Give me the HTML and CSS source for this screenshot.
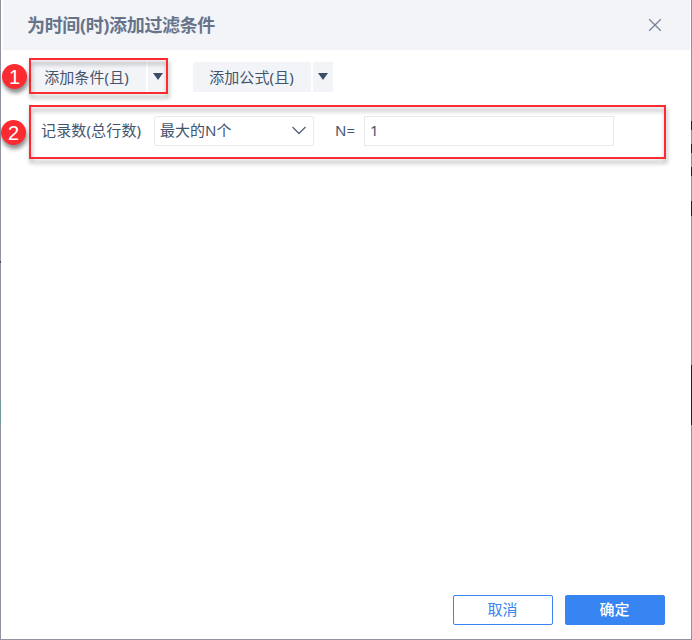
FILE: index.html
```
<!DOCTYPE html>
<html lang="zh-CN">
<head>
<meta charset="utf-8">
<title>为时间(时)添加过滤条件</title>
<link rel="stylesheet" href="styles.css">
</head>
<body>
<div class="dialog">
  <header class="header">
    <h1 class="title">为时间(时)添加过滤条件</h1>
    <svg class="close" viewBox="0 0 14 14"><path d="M1.2 1.2 12.8 12.8M12.8 1.2 1.2 12.8"/></svg>
  </header>
  <main class="content">
    <div class="toolbar">
      <div class="split">
        <button class="split-main">添加条件(且)</button>
        <button class="split-arrow"><svg viewBox="0 0 10 7"><path d="M0 0h10L5 7z"/></svg></button>
      </div>
      <div class="split">
        <button class="split-main">添加公式(且)</button>
        <button class="split-arrow"><svg viewBox="0 0 10 7"><path d="M0 0h10L5 7z"/></svg></button>
      </div>
    </div>
    <div class="filter">
      <span class="field-name">记录数(总行数)</span>
      <div class="select"><span>最大的N个</span><svg viewBox="0 0 14 9"><path d="M.5 1 7 7.5 13.5 1"/></svg></div>
      <span class="n-label">N=</span>
      <div class="input">1</div>
    </div>
  </main>
  <footer class="footer">
    <button class="btn">取消</button>
    <button class="btn primary">确定</button>
  </footer>
</div>
<div class="mark mark-one"></div>
<div class="mark mark-two"></div>
<div class="badge badge-one">1</div>
<div class="badge badge-two">2</div>
<i class="edge edge-a"></i><i class="edge edge-b"></i><i class="edge edge-c"></i><i class="edge edge-d"></i><i class="edge edge-e"></i>
<i class="edge edge-f"></i><i class="edge edge-g"></i>
</body>
</html>
```
FILE: styles.css
```
* { box-sizing: border-box; }
body {
  margin: 0;
  width: 692px;
  height: 640px;
  padding: 0 1px 1px;
  overflow: hidden;
  position: relative;
  background: #9193a0;
  color: #44546d;
  font: 15px/20px "Noto Sans", "Noto Sans CJK SC", sans-serif;
}
button { border: 0; padding: 0; margin: 0; font: inherit; color: inherit; white-space: nowrap; }
.dialog { height: 639px; display: flex; flex-direction: column; background: #fff; }
.header {
  height: 50px;
  margin: 0 1px 0 2px;
  padding: 0 28px 0 24px;
  display: flex;
  align-items: center;
  justify-content: space-between;
  background: #f2f4f8;
}
.title { margin: 0; font-size: 18px; line-height: 26px; font-weight: 700; letter-spacing: -.35px; color: #667389; }
.close { width: 14px; height: 14px; margin-bottom: 1px; fill: none; stroke: #77839b; stroke-width: 1.3; }
.content { flex: 1; padding: 12px 26px 0 29px; }
.toolbar { display: flex; gap: 25px; }
.split { display: flex; gap: 2px; }
.split-main { width: 118px; height: 30px; padding-right: 1px; letter-spacing: .1px; background: #f2f4f8; border-radius: 2px 0 0 2px; }
.split-arrow { width: 20px; height: 30px; display: flex; justify-content: center; padding: 11px 1px 0 0; background: #f2f4f8; }
.split-arrow svg { width: 10px; height: 7px; fill: #3d4d66; }
.split:first-child { width: 138px; }
.split:first-child .split-main { width: 116px; padding-right: 3px; }
.filter { display: flex; align-items: center; height: 30px; margin-top: 24px; padding-left: 11px; }
.field-name { width: 113px; padding-bottom: 2px; letter-spacing: .15px; white-space: nowrap; }
.select {
  width: 160px;
  height: 30px;
  padding: 0 7px 0 5px;
  display: flex;
  align-items: center;
  justify-content: space-between;
  border: 1px solid #e8eaed;
  border-radius: 2px;
}
.select span { padding-bottom: 2px; }
.select svg { width: 14px; height: 9px; margin-bottom: 1px; fill: none; stroke: #52617a; stroke-width: 1.3; }
.n-label { width: 29px; margin: 0 0 0 21px; padding-bottom: 2px; }
.input { width: 250px; height: 30px; padding: 3px 5px; border: 1px solid #e8eaed; }
.footer { display: flex; justify-content: flex-end; gap: 12px; padding: 0 26px 14px 0; }
.btn { width: 100px; height: 30px; padding: 0 1px 2px 0; border: 1px solid #3685f2; border-radius: 2px; background: #fff; color: #3685f2; }
.primary { background: #3685f2; color: #fff; font-weight: 500; }
.mark { position: absolute; border: 2px solid #fc2a31; filter: drop-shadow(1px 4px 2px rgba(0, 0, 0, .36)); }
.mark-one { left: 29px; top: 58px; width: 139px; height: 36px; }
.mark-two { left: 29px; top: 105px; width: 637px; height: 54px; }
.badge {
  position: absolute;
  width: 25px;
  height: 25px;
  border-radius: 50%;
  background: #fc2a31;
  color: #fff;
  font: 20px/26px "Liberation Sans", sans-serif;
  text-align: center;
  box-shadow: 1px 4px 4px rgba(0, 0, 0, .45);
}
.badge-one { left: 2px; top: 64px; }
.badge-two { left: 1px; top: 120px; }
.edge { position: absolute; width: 1px; left: 691px; background: #20202a; }
.edge-a { top: 121px; height: 9px; }
.edge-b { top: 144px; height: 9px; }
.edge-c { top: 167px; height: 9px; }
.edge-d { top: 201px; height: 15px; }
.edge-e { top: 365px; height: 60px; }
.edge-f { left: 0; top: 261px; height: 2px; background: #454954; }
.edge-g { left: 0; top: 401px; height: 24px; background: #6d9c9e; }
```
